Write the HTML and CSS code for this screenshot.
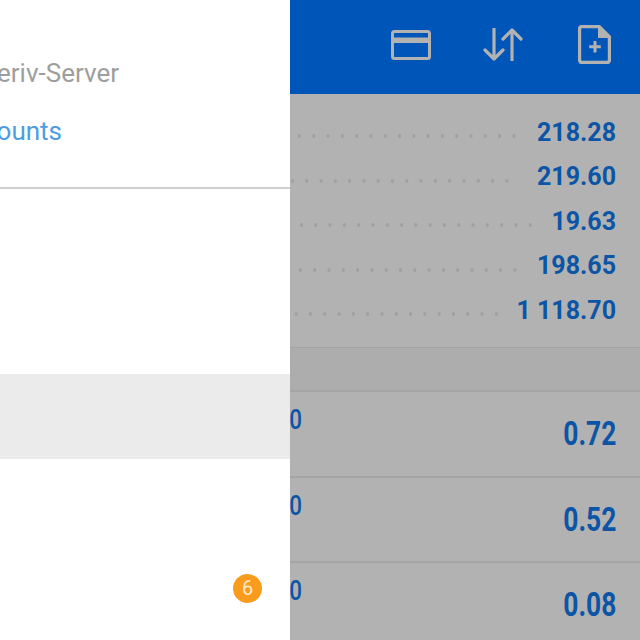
FILE: index.html
```html
<!DOCTYPE html>
<html>
<head>
<meta charset="utf-8">
<link rel="stylesheet" href="styles.css">
</head>
<body>
<div class="page">
  <aside class="drawer">
    <div class="account">
      <div class="server">Deriv-Server</div>
      <div class="manage">Manage accounts</div>
    </div>
    <div class="menu-item plain"></div>
    <div class="menu-item selected"></div>
    <div class="menu-item badge-row"><span class="badge">6</span></div>
  </aside>
  <main class="main">
    <header class="toolbar">
      <svg class="icon" width="40" height="30" viewBox="0 0 40 30">
        <rect x="1.500" y="1.500" width="37" height="27" rx="2" fill="none" stroke="#b2b2b2" stroke-width="3"/>
        <rect x="1" y="7.500" width="38" height="5.500" fill="#b2b2b2"/>
      </svg>
      <svg class="icon arrows" width="40" height="33" viewBox="0 0 40 33">
        <path d="M11 1V31M2 22L11 31L20 22M29 32V2M20 11L29 2L38 11" fill="none" stroke="#b2b2b2" stroke-width="3.200" stroke-linecap="round" stroke-linejoin="round"/>
      </svg>
      <svg class="icon" width="33" height="39" viewBox="0 0 33 39">
        <path d="M4 1.500H21L31.500 12V35A2.500 2.500 0 0 1 29 37.500H4A2.500 2.500 0 0 1 1.500 35V4A2.500 2.500 0 0 1 4 1.500Z" fill="none" stroke="#b2b2b2" stroke-width="3.400" stroke-linejoin="round"/>
        <path d="M20 2L31 13H20Z" fill="#b2b2b2"/>
        <path d="M17 16V27.500M11.200 21.800H22.800" fill="none" stroke="#b2b2b2" stroke-width="3"/>
      </svg>
    </header>
    <section class="summary">
      <div class="line"><span class="leader leader-a"></span><span class="amount">218.28</span></div>
      <div class="line"><span class="leader leader-b"></span><span class="amount">219.60</span></div>
      <div class="line"><span class="leader leader-c"></span><span class="amount">19.63</span></div>
      <div class="line"><span class="leader leader-d"></span><span class="amount">198.65</span></div>
      <div class="line"><span class="leader leader-e"></span><span class="amount">1 118.70</span></div>
    </section>
    <div class="section-head"></div>
    <div class="position"><span class="price">0</span><span class="profit">0.72</span></div>
    <div class="position"><span class="price">0</span><span class="profit">0.52</span></div>
    <div class="position"><span class="price">0</span><span class="profit">0.08</span></div>
  </main>
</div>
</body>
</html>
```
FILE: styles.css
```css
* { box-sizing: border-box; }
html, body { margin: 0; height: 100%; }
body { font-family: Roboto, "Liberation Sans", sans-serif; overflow: hidden; }
.page { display: flex; width: 640px; height: 640px; overflow: hidden; }

.drawer { width: 290px; flex: none; background: #fff; overflow: hidden; }
.account { height: 189px; padding-top: 58px; border-bottom: 2px solid #cfcfcf; }
.server, .manage { white-space: nowrap; display: flex; justify-content: flex-end; }
.server { width: 119px; font-size: 26px; line-height: 30px; color: #9e9e9e; }
.manage { width: 62px; margin-top: 28px; font-size: 26px; line-height: 30px; color: #4d9de0; }
.menu-item.plain { height: 185px; }
.menu-item.selected { height: 85px; background: #ebebeb; }
.badge-row { height: 181px; display: flex; justify-content: flex-end; align-items: flex-start; padding: 115px 28px 0 0; }
.badge { width: 29px; height: 29px; border-radius: 50%; background: #f99c1e; color: #fbeacb; font-size: 20px; line-height: 29px; text-align: center; }

.main { flex: 1; min-width: 0; background: #b2b2b2; }
.toolbar { height: 94px; background: #0056b8; display: flex; justify-content: flex-end; align-items: center; gap: 52px; padding: 0 29px 5px 0; }
.icon { flex: none; display: block; }
.arrows { margin-right: 3px; }
.summary { height: 254px; padding-top: 16px; border-bottom: 1px solid #a3a3a3; }
.line { height: 44.500px; display: flex; align-items: center; padding-right: 24px; }
.leader { flex: 1; height: 4px; margin-top: 8px; background: radial-gradient(circle, #a0a0a0 1.500px, transparent 2px) right center / 14.300px 4px repeat-x; }
.leader-a { margin-right: 16px; }
.leader-b { margin-right: 23px; }
.leader-c { margin-right: 14px; }
.leader-d { margin-right: 15px; }
.leader-e { margin-right: 13px; }
.amount { font-size: 25px; font-weight: 700; color: #0c55a6; white-space: nowrap; }
.section-head { height: 42px; background: #adadad; }
.position { height: 85.500px; border-top: 2px solid #a5a5a5; display: flex; justify-content: space-between; padding-right: 24px; }
.price { margin-left: -4px; margin-top: 13px; font-size: 28px; line-height: 30px; font-weight: 500; color: #0c55a6; transform: scaleX(.8); transform-origin: right center; }
.profit { margin-top: 23px; font-size: 33px; line-height: 38px; font-weight: 700; color: #0c55a6; transform: scaleX(.8); transform-origin: right center; }
```
